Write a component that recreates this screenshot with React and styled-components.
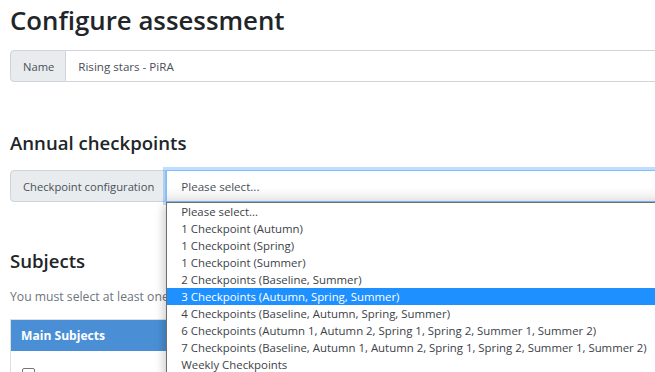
import React from 'react'
import styled, {createGlobalStyle} from 'styled-components'

const fontStack = `'Open Sans', 'Noto Sans', sans-serif`
const textColor = '#495057'
const borderColor = '#ced4da'
const highlight = '#1e90ff'

const GlobalStyle = createGlobalStyle`
  html, body {
    margin: 0;
    padding: 0;
    background: #fff;
    overflow: hidden;
  }
  body {
    font-family: ${fontStack};
    color: #212529;
  }
`

const Page = styled.main`
  width: 720px;
  padding-left: 10px;
`

const Title = styled.h1`
  margin: 4px 0 0;
  font-size: 25.8px;
  font-weight: 600;
  line-height: 33px;
  color: #212529;
`

const SectionTitle = styled.h4`
  margin: ${(p) => p.$top}px 0 0;
  font-size: 18.6px;
  font-weight: 600;
  line-height: 24px;
  color: #212529;
`

const InputGroup = styled.div`
  position: relative;
  display: flex;
  height: 32px;
  margin-top: ${(p) => p.$top}px;
  font-size: 11.6px;
`

const GroupLabel = styled.span`
  display: flex;
  align-items: center;
  padding: 0 11px 0 12px;
  background: #e9ecef;
  border: 1px solid ${borderColor};
  border-radius: 4px 0 0 4px;
  color: ${textColor};
  font-size: 11.2px;
  white-space: nowrap;
`

const TextInput = styled.div`
  flex: 1;
  display: flex;
  align-items: center;
  padding: 0 12px;
  border: 1px solid ${borderColor};
  border-left: 0;
  color: ${textColor};
`

const SelectWrap = styled.div`
  position: relative;
  flex: 1;
  display: flex;
`

const SelectBox = styled.div`
  flex: 1;
  display: flex;
  align-items: center;
  padding-left: 14px;
  border: 1px solid #80bdff;
  background: linear-gradient(#fff 55%, #ececec);
  box-shadow: 0 0 0 3px rgba(0, 123, 255, 0.25);
  color: ${textColor};
  z-index: 1;
`

const Popup = styled.ul`
  position: absolute;
  top: 100%;
  left: 0;
  right: 0;
  margin: 0;
  padding: 0;
  list-style: none;
  background: #fff;
  border: 1px solid #6e6e6e;
  box-shadow: -2px 3px 9px rgba(0, 0, 0, 0.22);
  z-index: 5;
`

const Option = styled.li`
  height: 17px;
  line-height: 17px;
  padding-left: 14px;
  font-size: 11.4px;
  white-space: nowrap;
  color: ${(p) => (p.$active ? '#fff' : '#3c4248')};
  background: ${(p) => (p.$active ? highlight : 'transparent')};
`

const Muted = styled.p`
  margin: 15px 0 0;
  font-size: 12.2px;
  line-height: 17px;
  color: #6c757d;
`

const Card = styled.section`
  margin-top: 14px;
  border: 1px solid rgba(0, 0, 0, 0.125);
  border-bottom: 0;
`

const CardHeader = styled.div`
  height: 31px;
  display: flex;
  align-items: center;
  padding-left: 10px;
  background: #4a8fd5;
  color: #fff;
  font-size: 12.1px;
  font-weight: 700;
`

const CardBody = styled.div`
  padding: 17px 11px 20px;
`

const Checkbox = styled.span`
  display: block;
  width: 13px;
  height: 13px;
  box-sizing: border-box;
  border: 1px solid #767676;
  border-radius: 2px;
  background: #fff;
`

const options = [
  'Please select...',
  '1 Checkpoint (Autumn)',
  '1 Checkpoint (Spring)',
  '1 Checkpoint (Summer)',
  '2 Checkpoints (Baseline, Summer)',
  '3 Checkpoints (Autumn, Spring, Summer)',
  '4 Checkpoints (Baseline, Autumn, Spring, Summer)',
  '6 Checkpoints (Autumn 1, Autumn 2, Spring 1, Spring 2, Summer 1, Summer 2)',
  '7 Checkpoints (Baseline, Autumn 1, Autumn 2, Spring 1, Spring 2, Summer 1, Summer 2)',
  'Weekly Checkpoints',
]

const App = () => (
  <React.Fragment>
    <GlobalStyle />
    <Page>
      <Title>Configure assessment</Title>
      <InputGroup $top={13}>
        <GroupLabel>Name</GroupLabel>
        <TextInput>Rising stars - PiRA</TextInput>
      </InputGroup>

      <SectionTitle $top={49}>Annual checkpoints</SectionTitle>
      <InputGroup $top={15}>
        <GroupLabel>Checkpoint configuration</GroupLabel>
        <SelectWrap>
          <SelectBox>Please select...</SelectBox>
          <Popup>
            {options.map((opt, i) => (
              <Option key={opt} $active={i === 5}>
                {opt}
              </Option>
            ))}
          </Popup>
        </SelectWrap>
      </InputGroup>

      <SectionTitle $top={47}>Subjects</SectionTitle>
      <Muted>You must select at least one subject.</Muted>
      <Card>
        <CardHeader>Main Subjects</CardHeader>
        <CardBody>
          <Checkbox />
        </CardBody>
      </Card>
    </Page>
  </React.Fragment>
)

export default App
